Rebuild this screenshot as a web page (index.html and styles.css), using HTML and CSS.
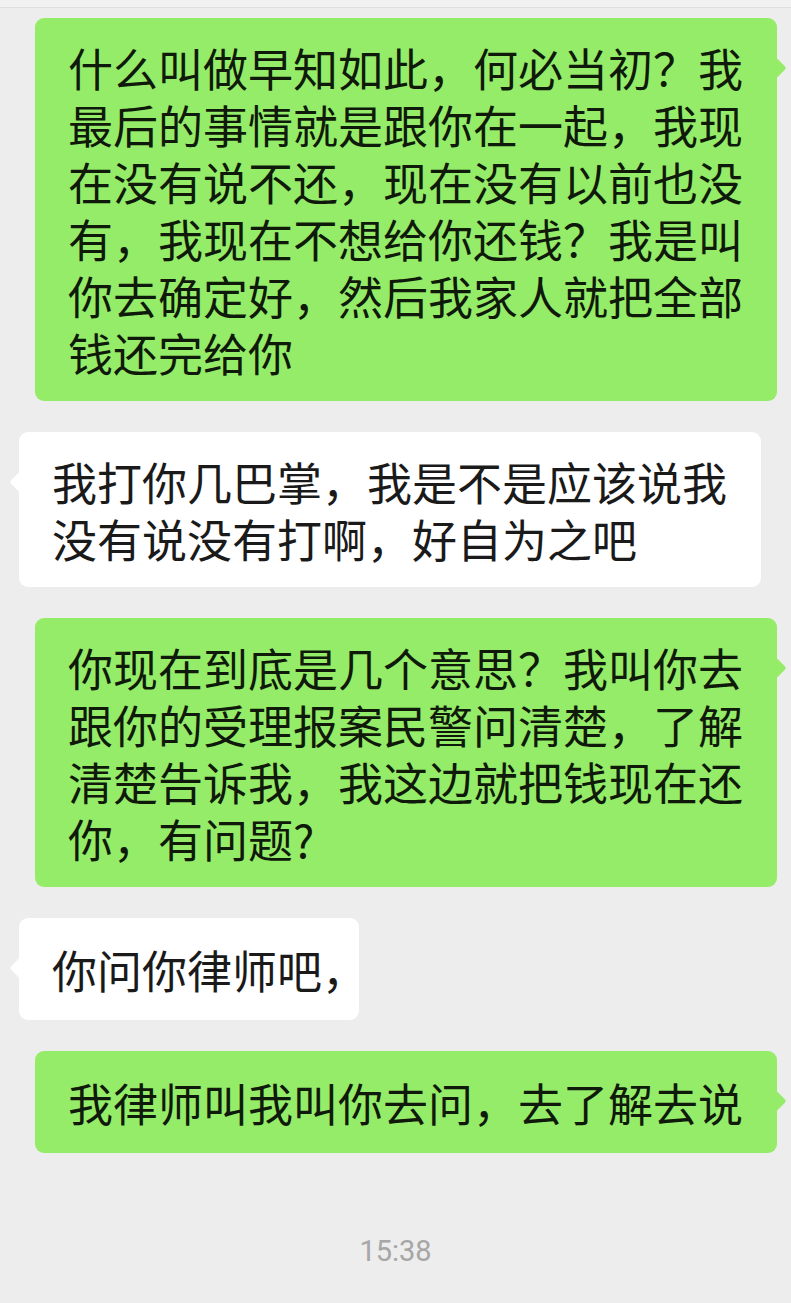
FILE: index.html
```html
<!DOCTYPE html>
<html lang="zh-CN">
<head>
<meta charset="utf-8">
<link rel="stylesheet" href="styles.css">
</head>
<body>
<div class="topbar"></div>
<main class="chat">
  <div class="row row-right">
    <div class="bubble bubble-green">什么叫做早知如此，何必当初？我<br>最后的事情就是跟你在一起，我现<br>在没有说不还，现在没有以前也没<br>有，我现在不想给你还钱？我是叫<br>你去确定好，然后我家人就把全部<br>钱还完给你</div>
  </div>
  <div class="row row-left">
    <div class="bubble bubble-white">我打你几巴掌，我是不是应该说我<br>没有说没有打啊，好自为之吧</div>
  </div>
  <div class="row row-right">
    <div class="bubble bubble-green">你现在到底是几个意思？我叫你去<br>跟你的受理报案民警问清楚，了解<br>清楚告诉我，我这边就把钱现在还<br>你，有问题?</div>
  </div>
  <div class="row row-left">
    <div class="bubble bubble-white bubble-single bubble-short">你问你律师吧，</div>
  </div>
  <div class="row row-right">
    <div class="bubble bubble-green bubble-single">我律师叫我叫你去问，去了解去说</div>
  </div>
  <div class="time">15:38</div>
</main>
</body>
</html>
```
FILE: styles.css
```css
html, body {
  margin: 0;
  padding: 0;
}
body {
  background: #ededed;
  width: 791px;
  height: 1303px;
  overflow: hidden;
  font-family: "Noto Sans CJK SC", "Noto Sans", sans-serif;
}
.topbar {
  height: 7px;
  background: #f1f1f1;
  border-bottom: 1px solid #dedede;
}
.chat {
  display: flex;
  flex-direction: column;
  gap: 31px;
  padding-top: 10px;
}
.row {
  display: flex;
}
.row-right {
  padding-left: 35px;
}
.row-left {
  padding-left: 19px;
}
.bubble {
  position: relative;
  box-sizing: border-box;
  width: 742px;
  padding: 21px 33px 20px 33px;
  border-radius: 9px;
  font-size: 45px;
  line-height: 57px;
  color: #141414;
  white-space: nowrap;
}
.bubble-single {
  padding-top: 23px;
  padding-bottom: 22px;
}
.bubble-green {
  background: #95ec69;
  color: #0f1a0a;
}
.bubble-white {
  background: #ffffff;
  color: #1a1a1a;
}
.bubble-short {
  width: 340px;
}
.bubble::after {
  content: "";
  position: absolute;
  top: 41px;
  width: 18px;
  height: 18px;
  border-radius: 3px;
  transform: rotate(45deg);
}
.bubble-green::after {
  right: -6px;
  background: #95ec69;
}
.bubble-white::after {
  left: -6px;
  background: #ffffff;
}
.time {
  margin-top: 50px;
  text-align: center;
  font-family: Roboto, "Noto Sans", sans-serif;
  font-size: 29px;
  color: #a6a6a6;
}
```
